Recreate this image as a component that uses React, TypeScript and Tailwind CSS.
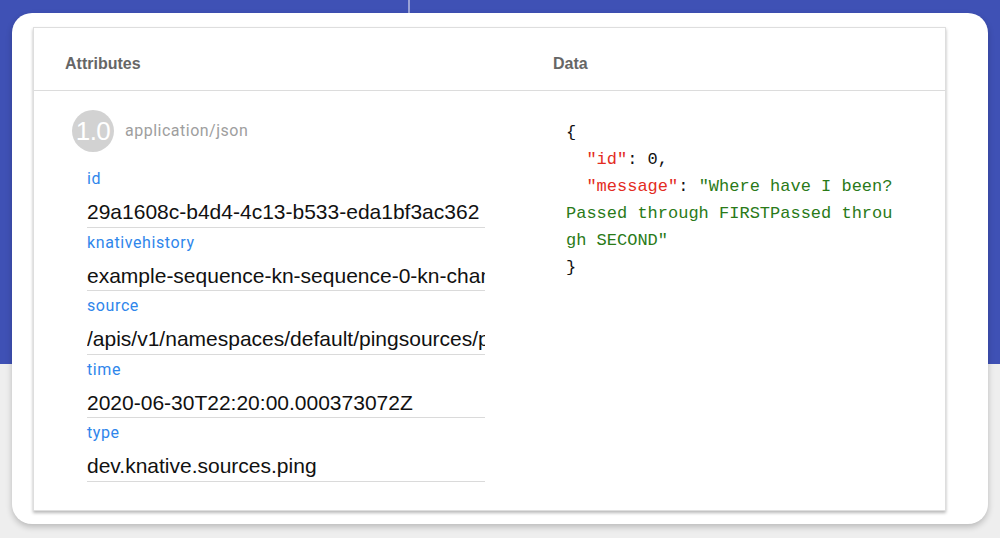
import React from 'react';

interface Attr {
    name: string;
    value: string;
}

const attrs: Attr[] = [
    { name: 'id', value: '29a1608c-b4d4-4c13-b533-eda1bf3ac362' },
    { name: 'knativehistory', value: 'example-sequence-kn-sequence-0-kn-channel.default.svc.cluster.local' },
    { name: 'source', value: '/apis/v1/namespaces/default/pingsources/ping-source' },
    { name: 'time', value: '2020-06-30T22:20:00.000373072Z' },
    { name: 'type', value: 'dev.knative.sources.ping' },
];

export default function App() {
    return (
        <div className="h-[538px] w-[1000px] overflow-hidden bg-[linear-gradient(to_bottom,#3f51b5_364px,#eeeeee_364px)] px-[12px]">
            {/* tab divider behind the card */}
            <div className="h-[13px] pl-[396px]">
                <div className="h-full w-[2px] bg-[#9aa2d6]" />
            </div>

            <div className="h-[511px] rounded-[20px] bg-white pt-[14px] pl-[21px] pr-[42px] shadow-[0_3px_6px_rgba(0,0,0,0.22)]">
                <div className="h-[484px] border border-[#dedede] bg-white shadow-[0_2px_3px_rgba(0,0,0,0.28)]">
                    {/* header */}
                    <div className="grid grid-cols-[487px_1fr] border-b border-[#dcdcdc] font-['Liberation_Sans',Arial,sans-serif] text-[16px] font-bold leading-[20px] text-[#666]">
                        <div className="pl-[31px] pt-[26px] pb-[16px]">Attributes</div>
                        <div className="pl-[32px] pt-[26px] pb-[16px]">Data</div>
                    </div>

                    {/* body */}
                    <div className="grid grid-cols-[487px_1fr]">
                        <div className="pl-[38px] pt-[19px]">
                            <div className="flex items-center gap-[11px]">
                                <div className="flex h-[42px] w-[42px] items-center justify-center overflow-hidden rounded-full bg-[#d2d2d2] font-['Liberation_Sans',Arial,sans-serif] text-[26px] leading-none tracking-[-0.5px] text-white">
                                    1.0
                                </div>
                                <span className="font-['Roboto',sans-serif] text-[16px] tracking-[0.5px] text-[#9e9e9e]">
                                    application/json
                                </span>
                            </div>

                            <div className="ml-[15px] mt-[12px] w-[398px]">
                                {attrs.map((a) => (
                                    <div key={a.name} className="border-b border-[#dadada]">
                                        <div className="pt-[4px] font-['Roboto',sans-serif] text-[16px] leading-[22px] tracking-[0.6px] text-[#2f86eb]">
                                            {a.name}
                                        </div>
                                        <div className="mt-[8px] overflow-hidden whitespace-nowrap pb-[0.5px] font-['Liberation_Sans',Arial,sans-serif] text-[21px] leading-[28px] text-[#111]">
                                            {a.value}
                                        </div>
                                    </div>
                                ))}
                            </div>
                        </div>

                        <div className="pl-[45px] pt-[28px]">
                            <pre className="w-[332px] whitespace-pre-wrap break-all font-['Liberation_Mono','Courier_New',monospace] text-[17px] leading-[27px] text-[#111]">
                                {'{\n  '}
                                <span className="text-[#e32b22]">"id"</span>
                                {': 0,\n  '}
                                <span className="text-[#e32b22]">"message"</span>
                                {': '}
                                <span className="text-[#2a7a18]">"Where have I been?Passed through FIRSTPassed through SECOND"</span>
                                {'\n}'}
                            </pre>
                        </div>
                    </div>
                </div>
            </div>
        </div>
    );
}
